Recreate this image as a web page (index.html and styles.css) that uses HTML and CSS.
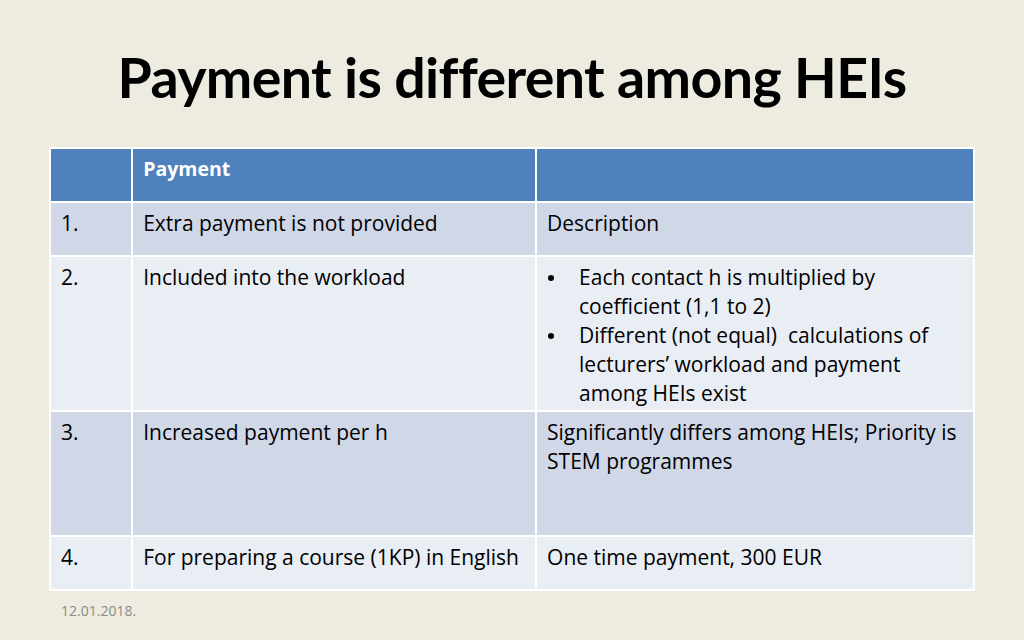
FILE: index.html
```html
<!DOCTYPE html>
<html>
<head>
<meta charset="utf-8">
<link rel="stylesheet" href="styles.css">
</head>
<body>
<div class="slide">
  <h1 class="title">Payment is different among HEIs</h1>
  <table class="grid">
    <colgroup>
      <col class="c1"><col class="c2"><col class="c3">
    </colgroup>
    <tr class="head">
      <td></td>
      <td>Payment</td>
      <td></td>
    </tr>
    <tr class="odd r1">
      <td>1.</td>
      <td>Extra payment is not provided</td>
      <td>Description</td>
    </tr>
    <tr class="even r2">
      <td>2.</td>
      <td>Included into the workload</td>
      <td>
        <ul class="bullets">
          <li>Each contact h is multiplied by coefficient (1,1 to 2)</li>
          <li>Different (not equal)&nbsp; calculations of lecturers’ workload and payment among HEIs exist</li>
        </ul>
      </td>
    </tr>
    <tr class="odd r3">
      <td>3.</td>
      <td>Increased payment per h</td>
      <td>Significantly differs among HEIs; Priority is STEM programmes</td>
    </tr>
    <tr class="even r4">
      <td>4.</td>
      <td>For preparing a course (1KP) in English</td>
      <td>One time payment, 300 EUR</td>
    </tr>
  </table>
  <div class="footer">12.01.2018.</div>
</div>
</body>
</html>
```
FILE: styles.css
```css
html, body {
  margin: 0;
  padding: 0;
  background: #EEECE1;
}
.slide {
  width: 1024px;
  height: 640px;
  display: flex;
  flex-direction: column;
  font-family: "Open Sans", "Lato", sans-serif;
  color: #000;
}
.title {
  margin: 0;
  padding-top: 42px;
  height: 147px;
  box-sizing: border-box;
  text-align: center;
  font-family: "Lato", sans-serif;
  font-size: 55.5px;
  line-height: 70px;
  font-weight: 700;
  letter-spacing: -0.6px;
}
.grid {
  margin-left: 49px;
  width: 926px;
  border-spacing: 2px;
  background: #fff;
  table-layout: fixed;
  font-size: 21px;
  line-height: 29px;
}
.c1 { width: 80px; }
.c2 { width: 401px; }
.c3 { width: 435px; }
.grid td {
  vertical-align: top;
  padding: 6px 8px 0 10px;
  box-sizing: border-box;
}
.head td {
  background: #4F81BD;
  color: #fff;
  font-weight: 700;
  font-size: 19.5px;
  height: 52px;
  padding-top: 5px;
}
.odd td { background: #D0D8E8; }
.even td { background: #E9EDF4; }
.r1 td, .r4 td { height: 52px; }
.r2 td { height: 153px; }
.r3 td { height: 123px; }
.bullets {
  margin: 0;
  padding: 0;
  list-style: none;
}
.bullets li {
  position: relative;
  padding-left: 32px;
}
.bullets li::before {
  content: "";
  position: absolute;
  left: 1px;
  top: 12px;
  width: 6px;
  height: 6px;
  border-radius: 50%;
  background: #000;
}
.footer {
  margin: 10px 0 0 61px;
  font-size: 14px;
  line-height: 19px;
  color: #8A8A8A;
}
```
